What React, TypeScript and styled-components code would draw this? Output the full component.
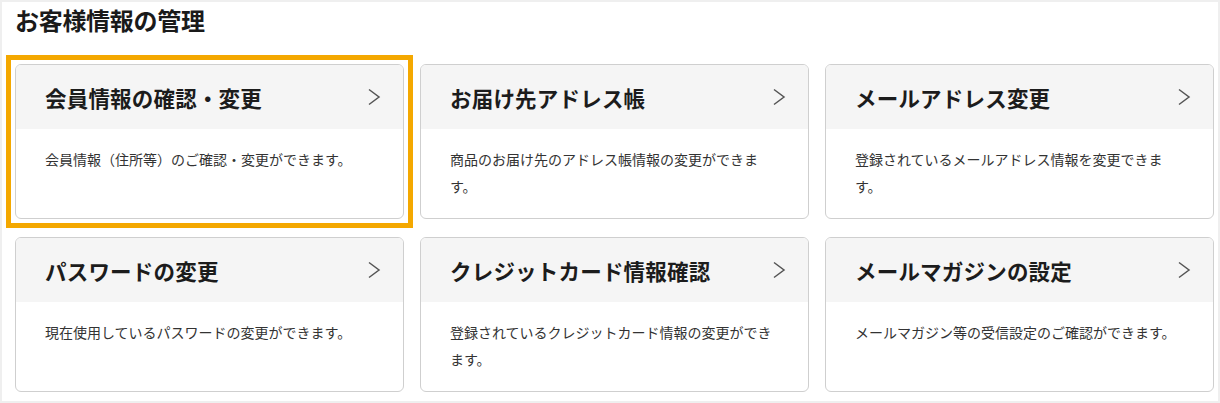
import React from "react";
import styled, { createGlobalStyle } from "styled-components";

const GlobalStyle = createGlobalStyle`
  html, body { margin: 0; padding: 0; background: #fff; }
  body { font-family: "Noto Sans CJK JP", "Noto Sans", sans-serif; color: #222; }
`;

const Frame = styled.div`
  box-sizing: border-box;
  width: 1220px;
  height: 403px;
  border: 2px solid #efefef;
  padding: 2px 3px 0 13px;
`;

const PageTitle = styled.h2`
  margin: 0 0 28px;
  font-size: 24px;
  line-height: 32px;
  font-weight: 700;
  letter-spacing: -0.3px;
  color: #1a1a1a;
`;

const Grid = styled.div`
  display: grid;
  grid-template-columns: repeat(3, 389px);
  column-gap: 16px;
  row-gap: 18px;
`;

const Card = styled.a<{ $focused?: boolean }>`
  position: relative;
  display: flex;
  flex-direction: column;
  box-sizing: border-box;
  height: 155px;
  border: 1px solid #cfcfcf;
  border-radius: 6px;
  text-decoration: none;
  color: inherit;
  background: #fff;

  ${(p) =>
    p.$focused
      ? `&::after {
    content: "";
    position: absolute;
    inset: -10px;
    border: 5px solid #f4a800;
    pointer-events: none;
  }`
      : ""}
`;

const CardHeader = styled.div`
  display: flex;
  align-items: center;
  justify-content: space-between;
  height: 64px;
  padding: 0 22px 0 29px;
  background: #f5f5f5;
  border-radius: 5px 5px 0 0;
`;

const CardTitle = styled.span`
  font-size: 21.5px;
  font-weight: 700;
  color: #1c1c1c;
  letter-spacing: 0.2px;
`;

const Chevron = styled.svg`
  width: 14px;
  height: 18px;
  flex: none;
`;

const CardBody = styled.p`
  margin: 0;
  padding: 17px 30px 0 29px;
  font-size: 14px;
  line-height: 27px;
  color: #333;
`;

const items = [
  { title: "会員情報の確認・変更", desc: "会員情報（住所等）のご確認・変更ができます。", focused: true },
  { title: "お届け先アドレス帳", desc: "商品のお届け先のアドレス帳情報の変更ができます。" },
  { title: "メールアドレス変更", desc: "登録されているメールアドレス情報を変更できます。" },
  { title: "パスワードの変更", desc: "現在使用しているパスワードの変更ができます。" },
  { title: "クレジットカード情報確認", desc: "登録されているクレジットカード情報の変更ができます。" },
  { title: "メールマガジンの設定", desc: "メールマガジン等の受信設定のご確認ができます。" },
];

export default function App() {
  return (
    <>
      <GlobalStyle />
      <Frame>
        <PageTitle>お客様情報の管理</PageTitle>
        <Grid>
          {items.map((it) => (
            <Card key={it.title} href="#" $focused={it.focused}>
              <CardHeader>
                <CardTitle>{it.title}</CardTitle>
                <Chevron viewBox="0 0 14 18">
                  <polyline points="2,1.5 12,9 2,16.5" fill="none" stroke="#555" strokeWidth="1.5" />
                </Chevron>
              </CardHeader>
              <CardBody>{it.desc}</CardBody>
            </Card>
          ))}
        </Grid>
      </Frame>
    </>
  );
}
